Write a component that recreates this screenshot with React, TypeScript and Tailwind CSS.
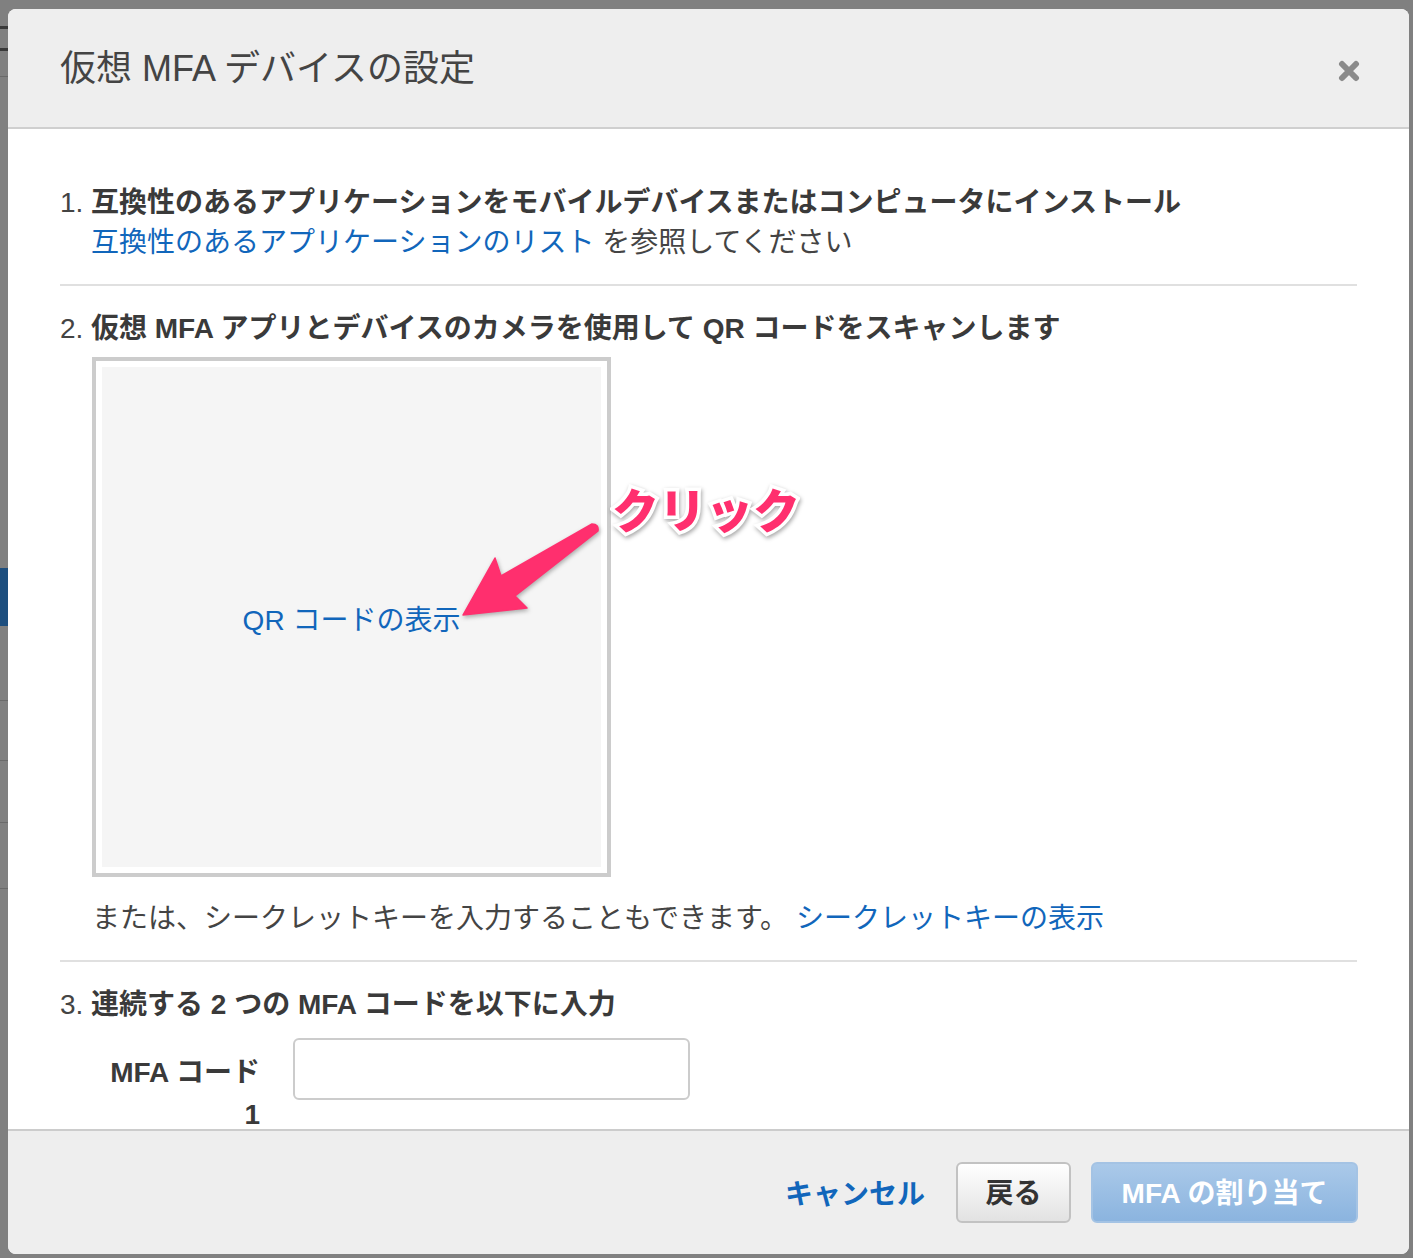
import React from 'react';

const font = "font-['Liberation_Sans','Noto_Sans_CJK_JP',sans-serif]";

const Heading: React.FC<{ num: string; children: React.ReactNode }> = ({ num, children }) => (
    <div className="flex pt-[6px] text-[28px] leading-[34px] text-[#444444]">
        <span className="w-[31px] shrink-0">{num}</span>
        <span className="font-bold text-[#3a3a3a]">{children}</span>
    </div>
);

const Divider = () => <div className="h-[2px] bg-[#e0e0e0]" />;

const App: React.FC = () => {
    return (
        <div className={`relative w-[1413px] h-[1258px] overflow-hidden bg-[#808080] ${font}`}>
            {/* page behind the backdrop, only a strip shows */}
            <div className="absolute left-0 top-[26px] w-[8px] h-[3px] bg-[#3a3a3a]" />
            <div className="absolute left-0 top-[48px] w-[8px] h-[3px] bg-[#3a3a3a]" />
            <div className="absolute left-0 top-[76px] w-[8px] h-[1px] bg-[#6a6a6a]" />
            <div className="absolute left-0 top-[568px] w-[8px] h-[58px] bg-[#1d4e7e]" />
            <div className="absolute left-0 top-[700px] w-[8px] h-[1px] bg-[#6a6a6a]" />
            <div className="absolute left-0 top-[760px] w-[8px] h-[1px] bg-[#6a6a6a]" />
            <div className="absolute left-0 top-[822px] w-[8px] h-[1px] bg-[#6a6a6a]" />
            <div className="absolute left-0 top-[888px] w-[8px] h-[1px] bg-[#6a6a6a]" />

            <div className="relative ml-[8px] mt-[9px] w-[1401px] h-[1245px] rounded-[8px] bg-white overflow-hidden flex flex-col">
                {/* header */}
                <div className="h-[120px] shrink-0 bg-[#eeeeee] border-b-2 border-[#cfcfcf] flex items-center justify-between pl-[52px] pr-[49px]">
                    <h1 className="pt-[2px] text-[36px] text-[#444444]">仮想 MFA デバイスの設定</h1>
                    <svg className="mt-[5px]" width="22" height="22" viewBox="0 0 22 22">
                        <path d="M4 4 L18 18 M18 4 L4 18" stroke="#8a8a8a" strokeWidth="6" strokeLinecap="round" />
                    </svg>
                </div>

                {/* body */}
                <div className="h-[1000px] shrink-0 overflow-hidden px-[52px] pt-[51px]">
                    <Heading num="1.">互換性のあるアプリケーションをモバイルデバイスまたはコンピュータにインストール</Heading>
                    <p className="ml-[31px] pt-[6px] text-[28px] leading-[34px] text-[#444444]">
                        <a className="text-[#1166bb]">互換性のあるアプリケーションのリスト</a> を参照してください
                    </p>
                    <div className="mt-[24px]"><Divider /></div>

                    <div className="mt-[20px]">
                        <Heading num="2.">仮想 MFA アプリとデバイスのカメラを使用して QR コードをスキャンします</Heading>
                    </div>
                    <div className="ml-[32px] mt-[11px] w-[519px] h-[520px] border-4 border-[#cccccc] bg-white p-[6px]">
                        <div className="w-full h-full bg-[#f5f5f5] flex items-center justify-center">
                            <a className="pt-[8px] text-[28px] text-[#1166bb]">QR コードの表示</a>
                        </div>
                    </div>
                    <p className="ml-[32px] mt-[19px] pt-[6px] text-[28px] leading-[34px] text-[#444444]">
                        または、シークレットキーを入力することもできます。 <a className="text-[#1166bb]">シークレットキーの表示</a>
                    </p>
                    <div className="mt-[24px]"><Divider /></div>

                    <div className="mt-[20px]">
                        <Heading num="3.">連続する 2 つの MFA コードを以下に入力</Heading>
                    </div>
                    <div className="ml-[32px] mt-[16px] flex items-start">
                        <label className="w-[168px] pt-[14px] text-right text-[28px] leading-[42px] font-bold text-[#3a3a3a]">
                            MFA コード<br />1
                        </label>
                        <input className="ml-[33px] w-[397px] h-[62px] rounded-[6px] border-2 border-[#cccccc] bg-white outline-none" />
                    </div>
                </div>

                {/* footer */}
                <div className="flex-1 bg-[#eeeeee] border-t-2 border-[#cccccc] flex items-center justify-end pr-[51px]">
                    <a className="mr-[31px] pt-[4px] text-[28px] font-bold text-[#1166bb]">キャンセル</a>
                    <button className="w-[115px] h-[61px] pt-[3px] rounded-[6px] border-2 border-[#c2c2c2] bg-gradient-to-b from-[#ffffff] to-[#e2e2e2] text-[28px] font-bold text-[#333333]">
                        戻る
                    </button>
                    <button className="ml-[20px] w-[267px] h-[61px] pt-[3px] rounded-[6px] border-2 border-[#a4c3e4] bg-gradient-to-b from-[#aac9e9] to-[#8bb4df] text-[28px] font-bold text-white">
                        MFA の割り当て
                    </button>
                </div>
            </div>

            {/* annotation */}
            <span className="absolute left-[612px] top-[478px] text-[47px] leading-[60px] font-black text-[#ff2f6e] [-webkit-text-stroke:7px_white] [paint-order:stroke_fill] drop-shadow-[1px_2px_2px_rgba(0,0,0,0.35)] font-['Noto_Sans_CJK_JP',sans-serif]">
                クリック
            </span>
            <svg className="absolute left-0 top-0 pointer-events-none drop-shadow-[1px_2px_2px_rgba(0,0,0,0.3)]" width="1413" height="1258" viewBox="0 0 1413 1258">
                <path
                    d="M463 615 L495 558 L501 576 L592 524 Q599 524 598 531 L515 596 L527 608 Z"
                    fill="#ff2f6e"
                    stroke="#ff2f6e"
                    strokeWidth="1.5"
                    strokeLinejoin="round"
                />
            </svg>
        </div>
    );
};

export default App;
